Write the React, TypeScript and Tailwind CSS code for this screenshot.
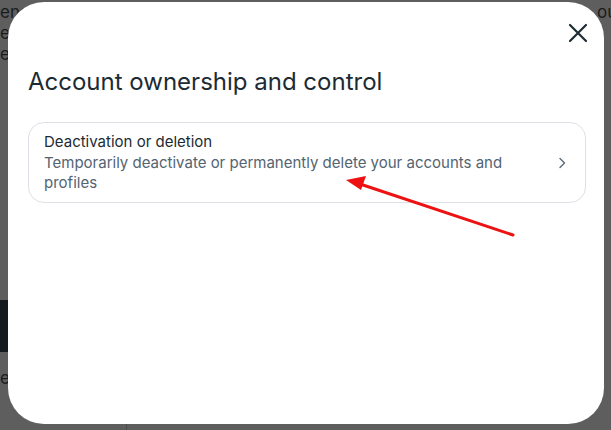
import React from "react";

export default function App() {
  return (
    <div
      className="relative w-[611px] h-[430px] overflow-hidden bg-[#5e5e5e] pt-[2px] pl-[8px]"
      style={{ fontFamily: "Inter, 'Noto Sans', sans-serif" }}
    >
      {/* backdrop page fragments (under the overlay) */}
      <div className="absolute left-0 top-[2px] text-[17px] leading-[21px] text-[#1b1b1b]">
        <div>ene</div>
        <div>ec</div>
        <div>e</div>
      </div>
      <div className="absolute left-[597px] top-[2px] text-[17px] leading-[21px] text-[#1b1b1b]">ou</div>
      <div className="absolute left-0 top-[300px] w-[10px] h-[52px] bg-[#131b1e]" />
      <div className="absolute left-0 top-[366px] text-[17px] text-[#1b1b1b]">er</div>
      <div className="absolute left-[126px] top-[424px] w-px h-[6px] bg-[#4a4a4a]" />

      {/* modal */}
      <div className="relative w-[596px] h-[422px] rounded-[36px] bg-white flex flex-col">
        <div className="flex justify-end pt-[21px] pr-[16px]">
          <svg width="20" height="20" viewBox="0 0 20 20" fill="none">
            <path d="M2 2 L18 18 M18 2 L2 18" stroke="#1c2b33" strokeWidth="2.2" strokeLinecap="round" />
          </svg>
        </div>
        <h1 className="mt-[24px] ml-[20px] text-[24px] leading-[30px] font-normal text-[#1c2b33]">
          Account ownership and control
        </h1>
        <div className="mt-[25px] mx-[20px] w-[558px] rounded-[16px] border border-[#dde1e6] flex items-center pl-[15px] pr-[16px] pt-[9px] pb-[9px]">
          <div className="flex-1">
            <div className="text-[15px] leading-[20px] text-[#1c2b33]">Deactivation or deletion</div>
            <div className="text-[15px] leading-[20px] text-[#536472] mt-[1px]">
              Temporarily deactivate or permanently delete your accounts and
              <br />
              profiles
            </div>
          </div>
          <svg width="12" height="12" viewBox="0 0 12 12" fill="none" className="mr-[1px]">
            <path d="M4 1.5 L8.5 6 L4 10.5" stroke="#5b6b78" strokeWidth="1.4" strokeLinecap="round" strokeLinejoin="round" />
          </svg>
        </div>
      </div>

      {/* red annotation arrow */}
      <svg className="absolute left-0 top-0 pointer-events-none" width="611" height="430" viewBox="0 0 611 430">
        <line x1="513" y1="235" x2="360" y2="184" stroke="#ee1111" strokeWidth="3" strokeLinecap="round" />
        <polygon points="346,180 366,176 361,190" fill="#ee1111" />
      </svg>
    </div>
  );
}
